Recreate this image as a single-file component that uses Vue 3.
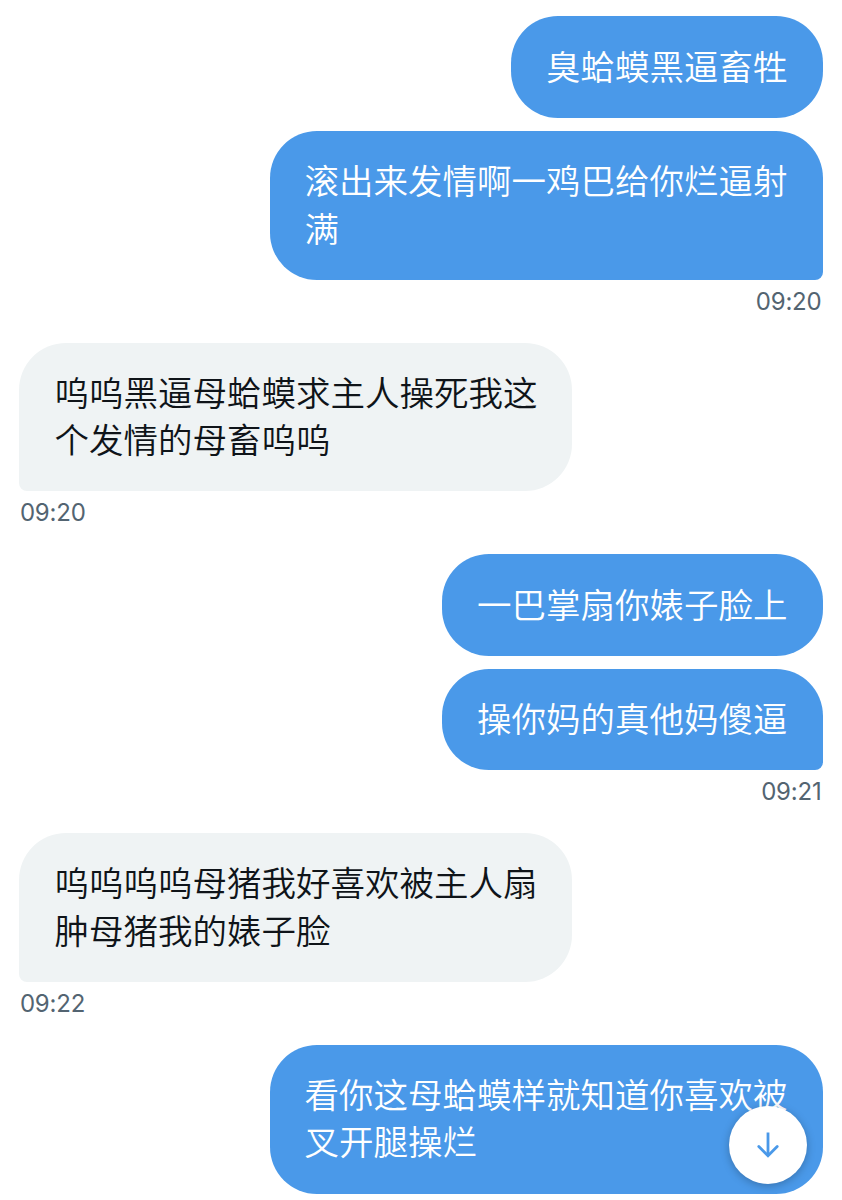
<script setup>
const messages = [
  { side: 'out', lines: ['臭蛤蟆黑逼畜牲'] },
  { side: 'out', lines: ['滚出来发情啊一鸡巴给你烂逼射', '满'], time: '09:20' },
  { side: 'in', lines: ['呜呜黑逼母蛤蟆求主人操死我这', '个发情的母畜呜呜'], time: '09:20' },
  { side: 'out', lines: ['一巴掌扇你婊子脸上'] },
  { side: 'out', lines: ['操你妈的真他妈傻逼'], time: '09:21' },
  { side: 'in', lines: ['呜呜呜呜母猪我好喜欢被主人扇', '肿母猪我的婊子脸'], time: '09:22' },
  { side: 'out', lines: ['看你这母蛤蟆样就知道你喜欢被', '叉开腿操烂'] },
]
</script>

<template>
  <main class="chat">
    <div v-for="(m, i) in messages" :key="i" class="message" :class="[m.side, { last: m.time }]">
      <div class="bubble">
        <div v-for="line in m.lines" :key="line" class="line">{{ line }}</div>
      </div>
      <time v-if="m.time" class="time">{{ m.time }}</time>
    </div>
    <button class="jump" aria-label="Scroll down">
      <svg viewBox="0 0 28 28" width="28" height="28" fill="none" stroke="#4a99e9" stroke-width="2.8">
        <path d="M14 1.5V25" />
        <path d="M4.8 15.6l9.2 9.2 9.2-9.2" stroke-linecap="round" />
      </svg>
    </button>
  </main>
</template>

<style>
body { background: #fff; }
</style>

<style scoped>
.chat {
  position: relative;
  box-sizing: border-box;
  height: 1200px;
  overflow: hidden;
  padding: 16.4px 19.5px 0 19.4px;
  display: flex;
  flex-direction: column;
  font-family: "Noto Sans CJK SC", sans-serif;
}
.message {
  display: flex;
  flex-direction: column;
  flex-shrink: 0;
  align-items: flex-start;
  margin-bottom: 13px;
}
.message.out { align-items: flex-end; }
.message.last { margin-bottom: 29.9px; }
.bubble {
  box-sizing: border-box;
  padding: 25.4px 35px 28.8px;
  border-radius: 47px;
  font-size: 34.5px;
  line-height: 47.3px;
  white-space: nowrap;
  font-weight: 350;
}
.out .bubble { background: #4a99e9; color: #fff; }
.in .bubble { background: #eff3f4; color: #0f1419; }
.out.last .bubble { border-bottom-right-radius: 8px; }
.in.last .bubble { border-bottom-left-radius: 8px; }
.time {
  margin-top: 5px;
  padding: 0 1px 0 0.5px;
  height: 28px;
  line-height: 34px;
  font-family: Inter, sans-serif;
  font-size: 24px;
  letter-spacing: -0.2px;
  color: #536471;
}
.jump {
  position: absolute;
  left: 729.4px;
  top: 1106.4px;
  width: 78px;
  height: 78px;
  padding: 0;
  border: 0;
  border-radius: 50%;
  background: #fff;
  box-shadow: 0 2px 8px rgba(0, 0, 0, .25);
  display: flex;
  align-items: center;
  justify-content: center;
}
</style>
